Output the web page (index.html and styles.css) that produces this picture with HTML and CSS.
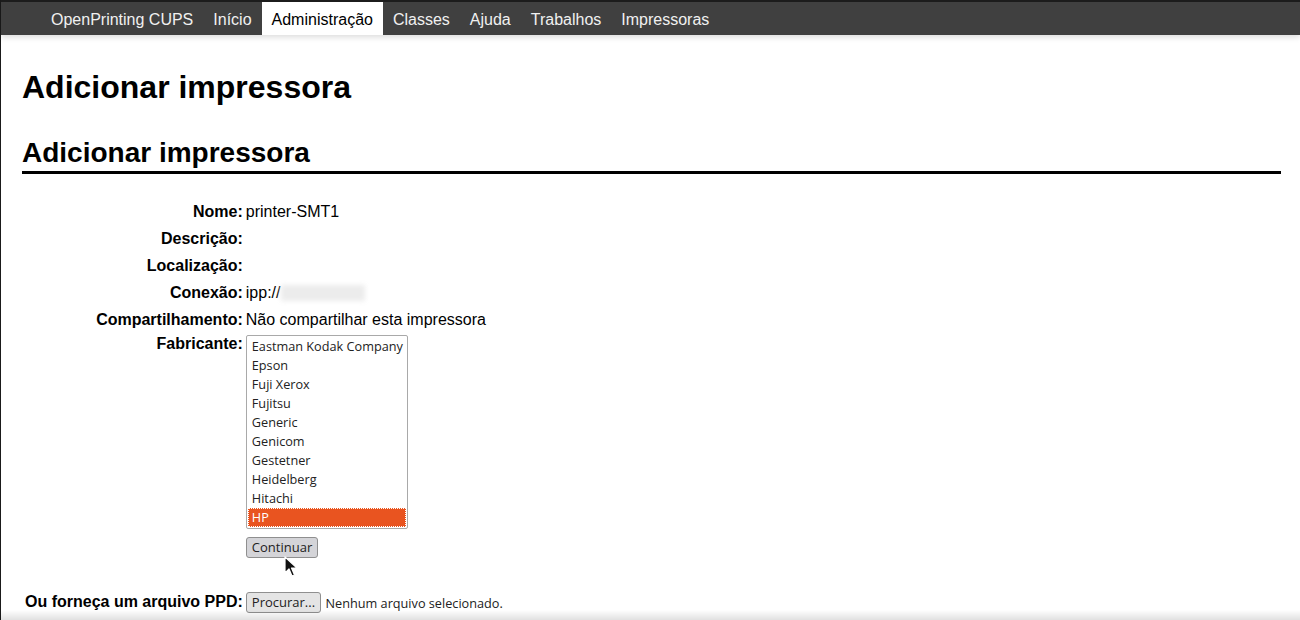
FILE: index.html
```html
<!DOCTYPE html>
<html lang="pt">
<head>
	<meta charset="UTF-8">
	<title>Adicionar impressora - CUPS</title>
	<link rel="stylesheet" href="styles.css">
</head>
<body>
<div class="frame">
	<div class="header">
		<ul class="nav">
			<li>OpenPrinting CUPS</li>
			<li>Início</li>
			<li class="active">Administração</li>
			<li>Classes</li>
			<li>Ajuda</li>
			<li>Trabalhos</li>
			<li>Impressoras</li>
		</ul>
	</div>
	<div class="body">
		<h1>Adicionar impressora</h1>
		<h2 class="title">Adicionar impressora</h2>
		<table class="fields">
			<tr><th>Nome:</th><td>printer-SMT1</td></tr>
			<tr><th>Descrição:</th><td></td></tr>
			<tr><th>Localização:</th><td></td></tr>
			<tr><th>Conexão:</th><td>ipp://<span class="blur"></span></td></tr>
			<tr><th>Compartilhamento:</th><td>Não compartilhar esta impressora</td></tr>
			<tr class="vendor">
				<th>Fabricante:</th>
				<td>
					<div class="listbox">
						<div class="opt">Eastman Kodak Company</div>
						<div class="opt">Epson</div>
						<div class="opt">Fuji Xerox</div>
						<div class="opt">Fujitsu</div>
						<div class="opt">Generic</div>
						<div class="opt">Genicom</div>
						<div class="opt">Gestetner</div>
						<div class="opt">Heidelberg</div>
						<div class="opt">Hitachi</div>
						<div class="opt selected">HP</div>
					</div>
					<div class="cont">
						<button class="btn">Continuar</button>
						<svg class="cursor" width="14" height="22" viewBox="0 0 14 22">
							<path d="M1 1 L1 17 L5 13 L8 20 L10.5 19 L7.5 12 L13 12 Z" fill="#111" stroke="#fff" stroke-width="1.2" stroke-linejoin="round"/>
						</svg>
					</div>
				</td>
			</tr>
			<tr class="ppd">
				<th>Ou forneça um arquivo PPD:</th>
				<td><button class="btn">Procurar...</button> <span class="nofile">Nenhum arquivo selecionado.</span></td>
			</tr>
		</table>
	</div>
</div>
<div class="shade"></div>
</body>
</html>
```

FILE: styles.css
```css
html, body{
	margin: 0;
	padding: 0;
	background: #fff;
	height: 100%;
	overflow: hidden;
}
body{
	font-family: "Liberation Sans", Arial, sans-serif;
	font-size: 16px;
	color: #000;
}
.frame{
	border-left: 1px solid #1a1a1a;
	min-height: 100%;
	box-sizing: border-box;
}
.header{
	background: #404040;
	border-top: 2px solid #1c1c1c;
	height: 33px;
	box-shadow: 0 2px 6px rgba(0,0,0,0.15);
}
.nav{
	list-style: none;
	margin: 0;
	padding: 0 0 0 40px;
	display: flex;
	height: 33px;
}
.nav li{
	padding: 2px 10px 0;
	line-height: 31px;
	color: #f0f0f0;
}
.nav li.active{
	background: #fff;
	color: #000;
}
.body{
	padding: 26px 19px 0 21px;
}
h1{
	font-size: 32px;
	margin: 0 0 23px;
	line-height: 52px;
}
h2.title{
	font-size: 28px;
	margin: 0;
	line-height: 34px;
	padding-bottom: 1px;
	border-bottom: 3px solid #000;
}
.fields{
	border-collapse: collapse;
	margin-top: 24px;
	margin-left: 3px;
}
.fields th{
	text-align: right;
	vertical-align: top;
	padding: 0 3px 0 0;
	height: 27px;
	line-height: 27px;
	white-space: nowrap;
}
.fields td{
	padding: 0;
	vertical-align: top;
	line-height: 27px;
	height: 27px;
}
.blur{
	display: inline-block;
	vertical-align: middle;
	width: 84px;
	height: 16px;
	margin-top: -2px;
	background: #ececec;
	filter: blur(2.5px);
}
.vendor th{
	line-height: 22px;
}
.listbox{
	margin-top: 2px;
	width: 162px;
	height: 194px;
	border: 1px solid #a9a9a9;
	border-radius: 2px;
	padding: 1px 1px;
	box-sizing: border-box;
	font-family: "Open Sans", "DejaVu Sans", sans-serif;
	font-size: 12.7px;
	color: #222;
}
.opt{
	height: 19px;
	line-height: 19px;
	padding-left: 4px;
	white-space: nowrap;
}
.opt.selected{
	background: #e95420;
	color: #fff;
	outline: 1px dotted #fff;
	outline-offset: -1px;
}
.cont{
	position: relative;
	height: 40px;
	padding-top: 8px;
	box-sizing: border-box;
}
.btn{
	font-family: "Open Sans", "DejaVu Sans", sans-serif;
	font-size: 13px;
	color: #222;
	background: #e4e4e4;
	border: 1px solid #8f8f8f;
	border-radius: 3px;
	height: 21px;
	padding: 0 5px;
	line-height: 19px;
	margin: 0;
	vertical-align: top;
}
.cont .btn{
	background: #d4d4d8;
}
.cursor{
	position: absolute;
	left: 38px;
	top: 27px;
}
.ppd th, .ppd td{
	line-height: 20px;
	height: 20px;
	padding-top: 23px;
}
.ppd .btn{
	vertical-align: middle;
}
.nofile{
	font-family: "Open Sans", "DejaVu Sans", sans-serif;
	font-size: 12.7px;
	color: #222;
	vertical-align: middle;
}
.shade{
	position: fixed;
	left: 0;
	right: 0;
	bottom: 0;
	height: 10px;
	background: linear-gradient(rgba(0,0,0,0), rgba(0,0,0,0.12));
}
```
